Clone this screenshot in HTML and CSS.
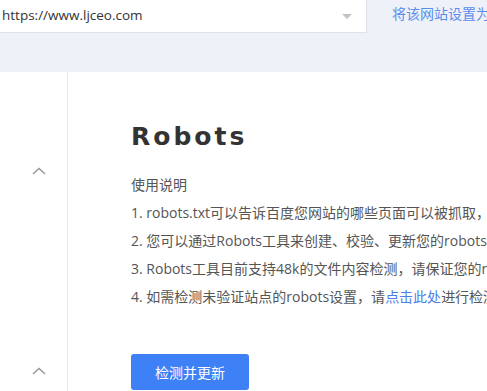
FILE: index.html
```html
<!DOCTYPE html>
<html lang="zh-CN">
<head>
  <meta charset="UTF-8">
  <title>Robots</title>
  <link rel="stylesheet" href="styles.css">
</head>
<body>

  <div class="site-bar">
    <div class="site-select">
      <span class="site-url">https://www.ljceo.com</span>
      <span class="caret"></span>
    </div>
    <a class="site-link" href="#">将该网站设置为默认站点</a>
  </div>

  <div class="page">
    <aside class="side">
      <div class="fold first"><svg width="14" height="8" viewBox="0 0 14 8"><path d="M1 7 L7 1.5 L13 7" fill="none" stroke="#999" stroke-width="1.5"/></svg></div>
      <div class="fold"><svg width="14" height="8" viewBox="0 0 14 8"><path d="M1 7 L7 1.5 L13 7" fill="none" stroke="#999" stroke-width="1.5"/></svg></div>
    </aside>

    <main class="content">
      <h1>Robots</h1>
      <div class="notes">
        <p>使用说明</p>
        <p>1. robots.txt可以告诉百度您网站的哪些页面可以被抓取，哪些页面不可以被抓取。</p>
        <p>2. 您可以通过Robots工具来创建、校验、更新您的robots.txt文件，或查看您网站robots.txt文件在百度生效的情况。</p>
        <p>3. Robots工具目前支持48k的文件内容检测，请保证您的robots.txt文件不要过大，目录最长不超过250个字符。</p>
        <p>4. 如需检测未验证站点的robots设置，请<a href="#">点击此处</a>进行检测。</p>
      </div>
      <button class="check-btn">检测并更新</button>
    </main>
  </div>

</body>
</html>
```

FILE: styles.css
```css
* {
  margin: 0;
  padding: 0;
  box-sizing: border-box;
}

body {
  font-family: "Open Sans", "Noto Sans CJK SC", sans-serif;
  font-size: 14px;
  color: #555;
  background: #fff;
  width: 487px;
  overflow: hidden;
}

a {
  color: #4b7ee8;
  text-decoration: none;
}

.site-bar {
  background: #eef1f7;
  height: 72px;
  display: flex;
  align-items: flex-start;
  white-space: nowrap;
  overflow: hidden;
}

.site-select {
  width: 367px;
  height: 33px;
  flex-shrink: 0;
  background: #fff;
  border-right: 1px solid #dde1e8;
  border-bottom: 1px solid #dde1e8;
  display: flex;
  align-items: center;
  justify-content: space-between;
  padding: 0 14px 2px 2px;
}

.site-url {
  font-size: 13.5px;
  color: #333;
}

.caret {
  width: 0;
  height: 0;
  border-left: 5px solid transparent;
  border-right: 5px solid transparent;
  border-top: 5px solid #c4c4c4;
  margin-top: 2px;
}

.site-link {
  margin-left: 25px;
  margin-top: 3px;
  font-size: 14px;
  color: #5b8def;
}

.page {
  display: flex;
  height: 319px;
}

.side {
  width: 68px;
  flex-shrink: 0;
  border-right: 1px solid #e6e6e6;
  display: flex;
  flex-direction: column;
  align-items: center;
  padding-left: 11px;
}

.fold {
  height: 8px;
  line-height: 0;
}

.fold.first {
  margin-top: 95px;
}

.fold + .fold {
  margin-top: 192px;
}

.content {
  padding: 48px 0 0 63px;
  white-space: nowrap;
  overflow: hidden;
}

h1 {
  font-family: "DejaVu Sans", sans-serif;
  font-size: 25px;
  font-weight: bold;
  letter-spacing: 3px;
  color: #333;
  line-height: 34px;
  margin-bottom: 17px;
}

.notes p {
  line-height: 28px;
}

.check-btn {
  margin-top: 43px;
  width: 118px;
  height: 36px;
  border: none;
  border-radius: 3px;
  background: #3e80f6;
  color: #fff;
  font-family: "Noto Sans CJK SC", sans-serif;
  font-size: 14px;
  cursor: pointer;
}
```
